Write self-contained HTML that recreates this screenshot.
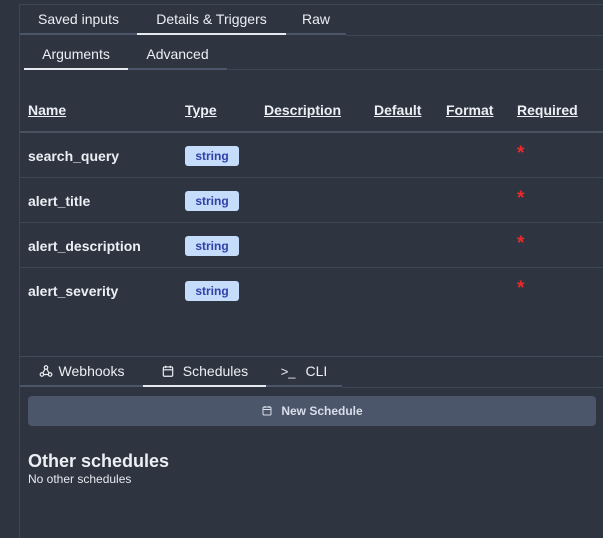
<!DOCTYPE html>
<html><head><style>
*{box-sizing:border-box;margin:0;padding:0}
body{width:603px;height:538px;background:#2e3440;font-family:"Liberation Sans",sans-serif;color:#eceff4;position:relative;overflow:hidden}
.a{position:absolute}
.tab{position:absolute;font-size:14px;color:#eceff4;text-align:center}
.th{position:absolute;top:102px;font-size:14px;font-weight:bold;text-decoration:underline;color:#eceff4}
.nm{position:absolute;left:28px;font-size:14px;font-weight:bold}
.pill{position:absolute;left:185px;width:54px;height:20px;background:#c6dcfb;border-radius:3px;color:#2f40a8;font-size:12px;font-weight:bold;text-align:center;line-height:20px}
.st{position:absolute;left:517px;color:#f02828;font-size:19px;font-weight:bold}
.hl{position:absolute;left:20px;right:0;height:1px;background:#3e4554}
</style></head><body>
<div class="a" style="left:19px;top:4px;width:1px;height:534px;background:#3e4656"></div>
<div class="a" style="left:19px;top:4px;right:0;height:1px;background:#3e4656"></div>
<div class="tab" style="left:20px;top:11px;width:117px">Saved inputs</div>
<div class="tab" style="left:137px;top:11px;width:149px">Details &amp; Triggers</div>
<div class="tab" style="left:286px;top:11px;width:60px">Raw</div>
<div class="a" style="left:20px;top:33px;width:326px;height:2px;background:#4c566a"></div>
<div class="a" style="left:137px;top:33px;width:149px;height:2px;background:#e5e9f0"></div>
<div class="a" style="left:346px;top:35px;right:0;height:1px;background:#3e4656"></div>
<div class="tab" style="left:24px;top:46px;width:104px">Arguments</div>
<div class="tab" style="left:128px;top:46px;width:99px">Advanced</div>
<div class="a" style="left:24px;top:68px;width:203px;height:2px;background:#4c566a"></div>
<div class="a" style="left:24px;top:68px;width:104px;height:2px;background:#e5e9f0"></div>
<div class="a" style="left:227px;top:69px;right:0;height:1px;background:#3e4656"></div>
<div class="th" style="left:28px">Name</div>
<div class="th" style="left:185px">Type</div>
<div class="th" style="left:264px">Description</div>
<div class="th" style="left:374px">Default</div>
<div class="th" style="left:446px">Format</div>
<div class="th" style="left:517px">Required</div>
<div class="a" style="left:20px;top:131px;right:0;height:2px;background:#4a5160"></div>
<div class="nm" style="top:148px">search_query</div><div class="pill" style="top:146px">string</div><div class="st" style="top:143px">*</div>
<div class="hl" style="top:177px"></div>
<div class="nm" style="top:193px">alert_title</div><div class="pill" style="top:191px">string</div><div class="st" style="top:188px">*</div>
<div class="hl" style="top:222px"></div>
<div class="nm" style="top:238px">alert_description</div><div class="pill" style="top:236px">string</div><div class="st" style="top:233px">*</div>
<div class="hl" style="top:267px"></div>
<div class="nm" style="top:283px">alert_severity</div><div class="pill" style="top:281px">string</div><div class="st" style="top:278px">*</div>
<div class="a" style="left:20px;top:356px;right:0;height:1px;background:#434c5e"></div>
<div class="tab" style="left:20px;top:363px;width:123px"><svg width="14" height="14" viewBox="0 0 24 24" fill="none" stroke="#eceff4" stroke-width="2" style="vertical-align:-2px;margin-right:6px"><circle cx="12" cy="6" r="3"/><circle cx="5" cy="18" r="3"/><circle cx="19" cy="18" r="3"/><path d="M10.5 8.5L6.5 15.5M8 18h8M13.5 8.5l3.5 7"/></svg>Webhooks</div>
<div class="tab" style="left:143px;top:363px;width:123px"><svg width="14" height="14" viewBox="0 0 24 24" fill="none" stroke="#eceff4" stroke-width="2" style="vertical-align:-2px;margin-right:8px"><rect x="4" y="5" width="16" height="16" rx="2"/><path d="M4 10h16M8 3v4M16 3v4"/></svg>Schedules</div>
<div class="tab" style="left:266px;top:363px;width:76px"><span style="font-size:13px;margin-right:10px">&gt;_</span>CLI</div>
<div class="a" style="left:20px;top:385px;width:322px;height:2px;background:#4c566a"></div>
<div class="a" style="left:143px;top:385px;width:123px;height:2px;background:#e5e9f0"></div>
<div class="a" style="left:342px;top:387px;right:0;height:1px;background:#3e4656"></div>
<div class="a" style="left:28px;top:396px;width:568px;height:30px;background:#4c566a;border-radius:4px;font-size:12px;font-weight:bold;color:#d8dee9;text-align:center;line-height:30px"><svg width="12" height="13" viewBox="0 0 24 24" fill="none" stroke="#d8dee9" stroke-width="2" style="vertical-align:-2px;margin-right:8px"><rect x="4" y="5" width="16" height="16" rx="2"/><path d="M4 10h16M8 3v4M16 3v4"/></svg>New Schedule</div>
<div class="a" style="left:28px;top:451px;font-size:18px;font-weight:bold">Other schedules</div>
<div class="a" style="left:28px;top:472px;font-size:12px;color:#e5e9f0">No other schedules</div>
</body></html>
